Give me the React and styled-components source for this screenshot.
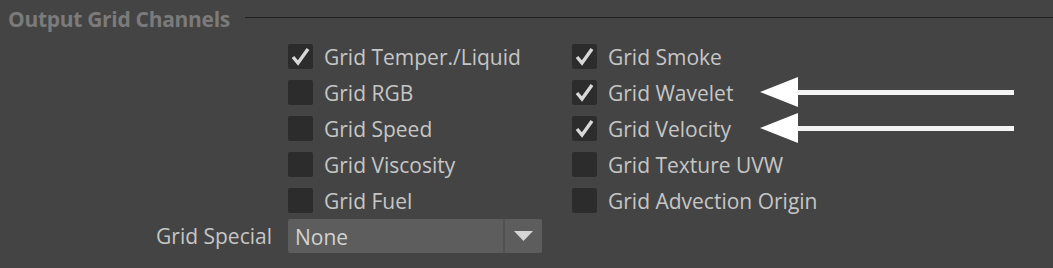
import React from "react";
import styled, { createGlobalStyle } from "styled-components";

const GlobalStyle = createGlobalStyle`
  body {
    margin: 0;
    background: #444444;
    font-family: "Open Sans", "Noto Sans", sans-serif;
    overflow: hidden;
  }
`;

const channels = [
  { label: "Grid Temper./Liquid", checked: true },
  { label: "Grid Smoke", checked: true },
  { label: "Grid RGB", checked: false },
  { label: "Grid Wavelet", checked: true, arrow: true },
  { label: "Grid Speed", checked: false },
  { label: "Grid Velocity", checked: true, arrow: true },
  { label: "Grid Viscosity", checked: false },
  { label: "Grid Texture UVW", checked: false },
  { label: "Grid Fuel", checked: false },
  { label: "Grid Advection Origin", checked: false },
];

export default function App() {
  return (
    <Page>
      <GlobalStyle />
      <Header>
        <Title>Output Grid Channels</Title>
        <Rule />
      </Header>
      <CheckGrid>
        {channels.map((c) => (
          <CheckItem key={c.label}>
            <Box>
              {c.checked && (
                <svg width="25" height="25" viewBox="0 0 25 25">
                  <polyline
                    points="5,13 10,19 20,5"
                    fill="none"
                    stroke="#d8d8d8"
                    strokeWidth="3.4"
                  />
                </svg>
              )}
            </Box>
            <Label>{c.label}</Label>
            {c.arrow && (
              <Arrow width="254" height="30" viewBox="0 0 254 30">
                <polygon points="0,15 38,0 38,30" fill="#ffffff" />
                <rect x="37" y="13" width="217" height="5" fill="#f4f4f4" />
              </Arrow>
            )}
          </CheckItem>
        ))}
      </CheckGrid>
      <SpecialRow>
        <FieldLabel>Grid Special</FieldLabel>
        <Select>
          <SelectValue>None</SelectValue>
          <SelectButton>
            <svg width="19" height="10" viewBox="0 0 19 10">
              <polygon points="0,0 19,0 9.5,10" fill="#d6d6d6" />
            </svg>
          </SelectButton>
        </Select>
      </SpecialRow>
    </Page>
  );
}

const Page = styled.div`
  width: 1053px;
  height: 268px;
  overflow: hidden;
`;

const Header = styled.div`
  display: flex;
  align-items: center;
  height: 38px;
  padding-left: 8px;
`;

const Title = styled.span`
  color: #7b7b7b;
  font-weight: 700;
  font-size: 21px;
  letter-spacing: -0.3px;
`;

const Rule = styled.div`
  flex: 1;
  height: 1px;
  margin-left: 15px;
  margin-top: -3px;
  background: #222222;
`;

const CheckGrid = styled.div`
  display: grid;
  grid-template-columns: 284px 1fr;
  grid-auto-rows: 36px;
  margin-left: 288px;
`;

const CheckItem = styled.div`
  position: relative;
  display: flex;
  align-items: center;
  gap: 11px;
`;

const Box = styled.div`
  width: 25px;
  height: 25px;
  border-radius: 2px;
  background: #2c2c2c;
  flex-shrink: 0;
`;

const Label = styled.span`
  color: #c6c6c6;
  font-size: 21px;
  margin-top: 2px;
`;

const Arrow = styled.svg`
  position: absolute;
  left: 188px;
  top: 50%;
  transform: translateY(-50%);
`;

const SpecialRow = styled.div`
  display: flex;
  align-items: center;
  gap: 16px;
  margin-top: 1px;
`;

const FieldLabel = styled.span`
  width: 272px;
  text-align: right;
  color: #c6c6c6;
  font-size: 21px;
`;

const Select = styled.div`
  display: flex;
  width: 254px;
  height: 34px;
  border-radius: 2px;
  background: #5d5d5d;
  overflow: hidden;
`;

const SelectValue = styled.span`
  flex: 1;
  padding-left: 7px;
  line-height: 36px;
  color: #d2d2d2;
  font-size: 21px;
  border-right: 2px solid #525252;
`;

const SelectButton = styled.div`
  display: flex;
  align-items: center;
  justify-content: center;
  width: 37px;
`;
